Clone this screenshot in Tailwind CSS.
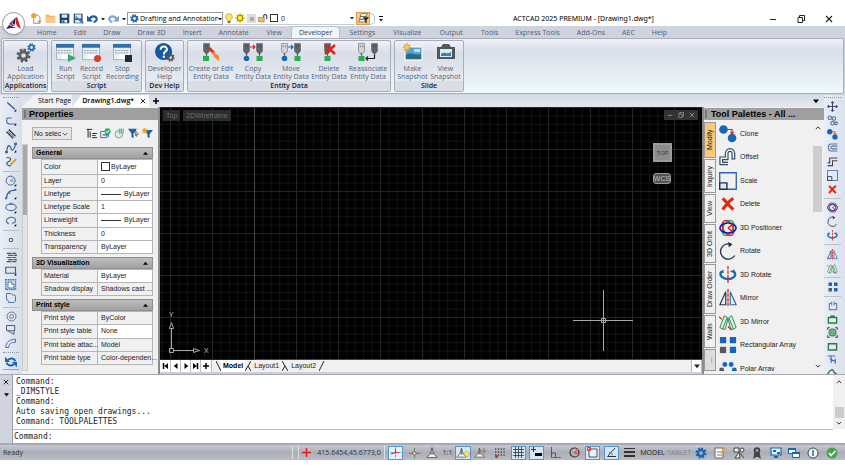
<!DOCTYPE html>
<html lang="en">
<head>
<meta charset="utf-8">
<title>ACTCAD 2025 PREMIUM - [Drawing1.dwg*]</title>
<script src="https://cdn.jsdelivr.net/npm/@tailwindcss/browser@4"></script>
</head>
<body class="bg-white">
<svg class="hidden" aria-hidden="true">
  <defs>
    <symbol id="gear" viewBox="0 0 16 16"><path fill="none" stroke="currentColor" stroke-width="3" stroke-dasharray="2.6 2.1" d="M8 2a6 6 0 1 1 0 12A6 6 0 1 1 8 2z"/><circle cx="8" cy="8" r="4" fill="none" stroke="currentColor" stroke-width="3"/></symbol>
    <symbol id="caret" viewBox="0 0 8 8"><path fill="currentColor" d="M0 2h8L4 7z"/></symbol>
    <symbol id="caretup" viewBox="0 0 8 8"><path fill="currentColor" d="M0 6h8L4 1z"/></symbol>
    <symbol id="chevd" viewBox="0 0 8 8"><path fill="none" stroke="currentColor" stroke-width="1.3" d="M1 2.5l3 3 3-3"/></symbol>
    <symbol id="chevu" viewBox="0 0 8 8"><path fill="none" stroke="currentColor" stroke-width="1.3" d="M1 5.5l3-3 3 3"/></symbol>
    <symbol id="close" viewBox="0 0 8 8"><path fill="none" stroke="currentColor" stroke-width="1.1" d="M1 1l6 6M7 1L1 7"/></symbol>
    <symbol id="restore" viewBox="0 0 8 8"><path fill="none" stroke="currentColor" stroke-width="1" d="M1 2.5h4.5V7.5H1zM2.5 2.5v-2h5v5h-2"/></symbol>
    <symbol id="min" viewBox="0 0 8 8"><path stroke="currentColor" stroke-width="1" d="M1 4.5h6"/></symbol>
    <symbol id="new" viewBox="0 0 16 16"><path fill="#fff" stroke="#666" d="M4 3h6l3 3v9H4z"/><path stroke="#f0a020" stroke-width="2" d="M4 0v8M0 4h8M1 1l6 6M7 1L1 7"/><path d="M9 12l6-2-2 5z" fill="#d88a2a"/></symbol>
    <symbol id="open" viewBox="0 0 16 16"><path fill="#f3b869" d="M1 2h5l1 2h8v10H1z"/><path fill="#f8c987" d="M1 6h14v8H1z"/></symbol>
    <symbol id="save" viewBox="0 0 16 16"><path fill="#1d3f6b" d="M1 1h14v14H1z"/><path fill="#dfeaf5" d="M4 2h8v5H4zM4 10h8v4H4z"/><path fill="#1d3f6b" d="M5 11h3v3H5z"/></symbol>
    <symbol id="saveas" viewBox="0 0 16 16"><path fill="#2a4f80" d="M1 1h13v14H1z"/><path fill="#dfeaf5" d="M3 2h9v6H3zM3 10h9v4H3z"/><path stroke="#2c7cc0" stroke-width="2" fill="none" d="M4 5l9 9M9 9l6 6"/></symbol>
    <symbol id="undo" viewBox="0 0 18 14"><path fill="none" stroke="currentColor" stroke-width="3.400" d="M4 8c3-6 11-6 12 0 0 3-2 4-5 5"/><path fill="currentColor" d="M0 2v10h10z"/></symbol>
    <symbol id="bulb" viewBox="0 0 12 16"><path fill="#ffe95a" stroke="#a58c18" d="M6 1a4.500 4.500 0 0 0-2.500 8.500L4 12h4l.5-2.500A4.500 4.500 0 0 0 6 1z"/><path fill="#666" d="M4 12h4v3H4z"/></symbol>
    <symbol id="sun" viewBox="0 0 16 16"><g stroke="#e0b400" stroke-width="2"><path d="M8 0v16M0 8h16M2.500 2.500l11 11M13.500 2.500l-11 11"/></g><circle cx="8" cy="8" r="4.500" fill="#ffee30" stroke="#8a7400" stroke-width="1.500"/></symbol>
    <symbol id="lock" viewBox="0 0 16 16"><path fill="none" stroke="#3a5a9a" stroke-width="2" d="M9 7V4a3 3 0 0 1 5 0v6"/><path fill="#f0c060" stroke="#8a6a30" d="M1 7h9v7H1z"/></symbol>
    <symbol id="filt" viewBox="0 0 16 16"><path fill="#fff" stroke="#555" d="M5 1h9L11 5H3zM4 5h9l-3 4H2zM3 9h8l-2 4H1z"/><path fill="#222" d="M7 6h9l-3.500 4v5l-2-1v-4z"/></symbol>
    <symbol id="scr" viewBox="0 0 20 20"><path fill="#e9eef3" stroke="#9fb0bf" d="M.5 1.500h18v16H.5z"/><path fill="#2f70ad" d="M0 1h19v4H0z"/><path stroke="#8a98a5" stroke-dasharray="2 1" d="M2 8h15M2 10.500h15"/><path fill="#fff" d="M6 12h12v5H6z"/></symbol>
    <symbol id="help" viewBox="0 0 20 20"><circle cx="9" cy="9" r="9" fill="#1158a5"/><path fill="none" stroke="#fff" stroke-width="2.200" d="M6 7c0-5 7-4 6.500 0C12 9 9.300 9 9.300 12"/><circle cx="9.300" cy="14.500" r="1.300" fill="#fff"/></symbol>
    <symbol id="plug" viewBox="0 0 8 20"><path fill="currentColor" stroke="#555" stroke-width=".6" d="M.5.5h7v9L5.500 12h-3L.5 9.500z"/><path stroke="#555" stroke-width="1.500" d="M4 12v3"/><path fill="#222" fill-opacity=".6" d="M2 3h1v2H2zM5 3h1v2H5z"/></symbol>
    <symbol id="xred" viewBox="0 0 16 16"><path fill="none" stroke="#dd2a12" stroke-width="3.600" d="M2 1.500c4 4 8 9 12 13M14 1.500C9 5 5 10 2 14.500"/></symbol>
    <symbol id="line" viewBox="0 0 16 16"><path stroke="#2a5d9a" stroke-width="1.800" d="M3 2l10 9"/><path d="M12 14h3v-3z"/></symbol>
    <symbol id="clone" viewBox="0 0 20 20"><circle cx="5" cy="5" r="4.800" fill="#1466b8"/><circle cx="14.500" cy="14.500" r="4.800" fill="#1466b8"/><path fill="none" stroke="#e02020" stroke-width="1.300" d="M9 5h5.500v4M12.500 7.500l2 2.500 2-2.500"/></symbol>
    <symbol id="offset" viewBox="0 0 20 20"><path fill="none" stroke="#34496a" stroke-width="1.300" d="M1 18.500V10h6V6a5 5 0 0 1 10.500 0v6h-3V6a2.200 2.200 0 0 0-4.500 0v7H4v3h6M1 18.500h9"/></symbol>
    <symbol id="scale" viewBox="0 0 20 20"><path fill="none" stroke="#2b67a8" stroke-width="1.500" d="M.8.8h18.400v18.400H.8z"/><path fill="#dfe6ee" stroke="#1e2c48" stroke-width="1.500" d="M.8 12h8v7.200h-8z"/></symbol>
    <symbol id="pos3d" viewBox="0 0 20 20"><g fill="none" stroke-width="1.700"><ellipse cx="10" cy="10" rx="5.500" ry="9" stroke="#10c040" transform="rotate(28 10 10)"/><ellipse cx="10" cy="10" rx="5.500" ry="9" stroke="#e82020" transform="rotate(-28 10 10)"/><ellipse cx="10" cy="10" rx="9" ry="5.500" stroke="#1010e0"/><path stroke="#e82020" d="M10 10l5 4M10 10l5-4"/></g></symbol>
    <symbol id="rot" viewBox="0 0 20 20"><path fill="none" stroke="#23344f" stroke-width="1.500" d="M13 2.500A8.500 8.500 0 1 0 17.500 15"/><path fill="#23344f" d="M10 0l5 2.500L11 6z"/></symbol>
    <symbol id="rot3d" viewBox="0 0 20 20"><path fill="none" stroke="#1c6ea8" stroke-width="2.600" d="M3 6C-1 11 5 14.500 10 14.500S20 11 17 7"/><path fill="#1c6ea8" d="M12 6l5-2 2 5zM0 7l5-3v4z"/><path stroke="#e02020" stroke-width="1.400" stroke-dasharray="4 1" d="M10 0v20"/></symbol>
    <symbol id="mirror" viewBox="0 0 20 20"><path fill="none" stroke="#23344f" stroke-width="1.300" d="M7.500 3v14.500H1z"/><path fill="none" stroke="#2b67a8" stroke-width="1.300" d="M12.500 3v14.500H19z"/><path stroke="#e02020" stroke-width="1.500" stroke-dasharray="4 1" d="M10 0v20"/></symbol>
    <symbol id="mir3d" viewBox="0 0 20 20"><g fill="#dff3e4" stroke="#2f8a52" stroke-width="1.100"><path d="M1 16L6 3l3 2-5 13zM4 18h3L10 6 9 5M19 16L14 3l-3 2 5 13zM16 18h-3L10 6"/></g><path stroke="#e02020" stroke-width="1.400" d="M0 4l3 3M10 15l4 4"/></symbol>
    <symbol id="array" viewBox="0 0 20 20"><path fill="#1466b8" d="M1 1h7v7H1zM12 1h7v7h-7zM12 12h7v7h-7z"/><path fill="#5a5a5a" d="M1 12h7v7H1z"/></symbol>
    <symbol id="polar" viewBox="0 0 20 20"><g fill="#1466b8"><circle cx="6.500" cy="5" r="2.700"/><circle cx="13.500" cy="5" r="2.700"/><circle cx="17" cy="11" r="2.700"/></g><circle cx="3" cy="11" r="2.700" fill="#5a5a5a"/></symbol>
    <symbol id="curve" viewBox="0 0 16 16"><path fill="none" stroke="#3a6ea8" stroke-width="1.500" d="M3 4C0 9 3 12 7 12h7M3 4h6"/><path d="M12 14h3v-3z"/></symbol>
    <symbol id="dbl" viewBox="0 0 16 16"><path stroke="#20304c" stroke-width="1.500" d="M2 5l9 9M5 2l9 9"/><path stroke="#3a7ec0" stroke-width="1.200" d="M3.500 3.500l9 9"/></symbol>
    <symbol id="spline" viewBox="0 0 16 16"><path fill="none" stroke="#35507a" stroke-width="1.500" d="M2 13c2-14 6-6 6-4s4 4 6-6"/><path fill="#2f70b0" d="M0 12h4v3H0zM12 1h4v3h-4z"/><path d="M12 14h3v-3z"/></symbol>
    <symbol id="sketch" viewBox="0 0 16 16"><path fill="none" stroke="#35507a" stroke-width="1.500" d="M2 2c8 0 6 4 2 6s0 6 4 5"/><path stroke="#e89a28" stroke-width="2.500" d="M7 12l8-8"/></symbol>
    <symbol id="circ" viewBox="0 0 16 16"><circle cx="7.500" cy="7.500" r="6" fill="none" stroke="#4a6288" stroke-width="1.300"/><path stroke="#3a7ec0" d="M7 8l4-4M7 8h5"/><path d="M12 15h3v-3z"/></symbol>
    <symbol id="arc" viewBox="0 0 16 16"><path fill="none" stroke="#35507a" stroke-width="1.500" d="M2 14C2 7 6 3 13 3"/><path fill="#3a7ec0" d="M0 12h3v3H0zM12 1h3v3h-3zM4 5h3v3H4z"/><path d="M12 15h3v-3z"/></symbol>
    <symbol id="ell" viewBox="0 0 16 16"><ellipse cx="8" cy="7" rx="7" ry="4.500" fill="none" stroke="#4a6fa0" stroke-width="1.500"/><path fill="#3a7ec0" d="M6.500 1h3v3h-3z"/><path d="M12 15h3v-3z"/></symbol>
    <symbol id="ellarc" viewBox="0 0 16 16"><path fill="none" stroke="#4a6fa0" stroke-width="1.500" d="M2 9C0 3 14 0 14 7c0 2-1 4-5 4M5 12l-3-3"/><path d="M12 15h3v-3z"/></symbol>
    <symbol id="pt" viewBox="0 0 16 16"><path fill="none" stroke="#4a6288" stroke-width="1.300" d="M6 6h4v4H6z"/></symbol>
    <symbol id="hatch" viewBox="0 0 16 16"><path stroke="#555" stroke-width="1.700" stroke-dasharray="7 1" d="M1 2h14M3 5h13M1 8h14M3 11h13M1 14h14"/></symbol>
    <symbol id="rect" viewBox="0 0 16 16"><path fill="none" stroke="#3c5f90" stroke-width="1.500" d="M1 3h13v8H1z"/><path d="M12 14h3v-3z"/></symbol>
    <symbol id="region" viewBox="0 0 16 16"><path fill="#cfe2f5" stroke="#2f78c0" stroke-width="2" stroke-dasharray="2 1" d="M1 1h13v13H1z"/><path fill="#fff" stroke="#35507a" d="M4 4h5v3h3v5H4z"/></symbol>
    <symbol id="bound" viewBox="0 0 16 16"><path fill="none" stroke="#4a6fa0" stroke-width="1.300" d="M2 2h6l2 2h3l1 2v6l-2 2H5l-1-3-2-1z"/></symbol>
    <symbol id="donut" viewBox="0 0 16 16"><g fill="none" stroke="#5a6c88" stroke-width="1.300"><circle cx="8" cy="8" r="6.500"/><circle cx="8" cy="8" r="2.800"/></g></symbol>
    <symbol id="wipe" viewBox="0 0 16 16"><path fill="none" stroke="#4a5c78" stroke-width="1.300" d="M2 2h11v7H2zM4 9l8 5V9"/></symbol>
    <symbol id="trace" viewBox="0 0 16 16"><path fill="#dfe8f8" stroke="#5068b0" stroke-width="1.300" d="M1 14c0-7 5-11 13-11v4C8 7 5 9 5 14z"/></symbol>
    <symbol id="sync" viewBox="0 0 16 16"><g fill="none" stroke="#1666b4" stroke-width="2.600"><path d="M4 5c4-3 8-2 10 2M12 11c-4 3-8 2-10-2"/></g><path fill="#1666b4" d="M0 1v7h7zM16 15V8H9z"/></symbol>
    <symbol id="move" viewBox="0 0 16 16"><path fill="none" stroke="#3a4c6c" stroke-width="1.500" d="M8 1v14M1 8h14M6 3l2-2 2 2M6 13l2 2 2-2M3 6L1 8l2 2M13 6l2 2-2 2"/></symbol>
    <symbol id="copy" viewBox="0 0 16 16"><g fill="none" stroke="#4a6898" stroke-width="1.500"><circle cx="4" cy="4" r="2.500"/><circle cx="10" cy="5" r="2.500"/><circle cx="8" cy="12" r="2.500"/><circle cx="13" cy="12" r="2"/></g></symbol>
    <symbol id="cshape" viewBox="0 0 16 16"><path fill="none" stroke="#5078a8" stroke-width="1.500" d="M15 3H5C1 4 1 12 5 13h10M15 6H7C5 7 5 9 7 10h8"/></symbol>
    <symbol id="steps" viewBox="0 0 16 16"><path fill="none" stroke="#444" stroke-width="1.500" d="M1 14h7V7h7M1 10h3V3h11"/></symbol>
    <symbol id="brk" viewBox="0 0 16 16"><path fill="none" stroke="#4468a0" stroke-width="1.500" d="M5 4H2v10h12V4h-3M6 1v6M10 1v6"/></symbol>
    <symbol id="grn" viewBox="0 0 16 16"><path fill="#dff3e4" stroke="#2c7a4c" stroke-width="2" d="M2 5h12v8H2z"/><path fill="#2c7a4c" d="M5 2h6v3H5z"/></symbol>
    <symbol id="grnsel" viewBox="0 0 16 16"><path fill="none" stroke="#222" stroke-width="1.300" d="M1 4V1h3M12 1h3v3M15 12v3h-3M4 15H1v-3"/><circle cx="8" cy="8" r="5" fill="#8ccf9c" stroke="#2c7a4c" stroke-width="1.500"/><path fill="none" stroke="#2c7a4c" d="M6 6h4v4H6z"/></symbol>
    <symbol id="grnbox" viewBox="0 0 16 16"><path fill="none" stroke="#2c7a4c" stroke-width="2" d="M2 4h12v9H2z"/></symbol>
    <symbol id="txt" viewBox="0 0 16 16"><path fill="none" stroke="#3a6ea8" stroke-width="1.600" d="M1 3h11M6 3v10M4 7l8 4M12 7v7"/></symbol>
    <symbol id="pyr" viewBox="0 0 16 16"><path fill="#eee" stroke="#555" stroke-width="1.100" d="M8 1l2.500 8L15 14H1l4.500-5zM5.500 9h5M8 1v8"/></symbol>
    <symbol id="tree" viewBox="0 0 16 16"><path fill="none" stroke="#222" stroke-width="1.400" d="M1 2h8M3 2v12M6 5v9M9 8h7M9 11h5M9 14h7"/></symbol>
    <symbol id="qsel" viewBox="0 0 16 16"><path fill="none" stroke="#3a6080" stroke-width="1.200" d="M1 5h9v9H1z"/><circle cx="11" cy="5" r="4.500" fill="#3cb060"/><path fill="none" stroke="#fff" stroke-width="1.400" d="M8.500 5l2 2 3-4"/><path fill="none" stroke="#2a70b0" stroke-width="1.500" d="M4 10h8v3"/></symbol>
    <symbol id="sel2" viewBox="0 0 16 16"><circle cx="7" cy="9" r="5.500" fill="#dce6ee" stroke="#6a7a8a"/><path fill="#4aa860" d="M7 1h7v7H7z"/><path stroke="#fff" d="M9 1v7M12 1v7"/></symbol>
    <symbol id="funnel" viewBox="0 0 16 16"><path fill="#1c62a8" d="M0 1h13L8 8v7l-3-2V8z"/><path fill="#fff" stroke="#333" d="M10 3l5 6h-3l1 3-2-1z"/></symbol>
    <symbol id="funnel2" viewBox="0 0 16 16"><path fill="#1c62a8" d="M2 3h14l-5 6v6l-3-2V9z"/><path stroke="#e8a828" stroke-width="1.500" d="M4 0v8M0 4h8M1 1l6 6M7 1L1 7"/></symbol>
  </defs>
</svg>

<div class="relative flex h-screen flex-col overflow-hidden pt-[11px] pb-[15px] font-['Open_Sans','Noto_Sans',sans-serif] text-[7px] leading-[8px] text-[#222]">

  <!-- title bar -->
  <header class="flex h-[15px] shrink-0 items-center pl-[31px]">
    <div class="flex items-center gap-[3px]" role="toolbar" aria-label="Quick access">
      <button aria-label="New"><svg class="size-[11px]"><use href="#new"/></svg></button>
      <button aria-label="Open"><svg class="size-[11px]"><use href="#open"/></svg></button>
      <button aria-label="Save"><svg class="size-[11px]"><use href="#save"/></svg></button>
      <button aria-label="Save as"><svg class="size-[11px]"><use href="#saveas"/></svg></button>
      <button aria-label="Undo" class="text-[#1a5fb0]"><svg class="h-[9px] w-[11px]"><use href="#undo"/></svg></button>
      <button aria-label="Undo list"><svg class="size-[4px]"><use href="#caret"/></svg></button>
      <button aria-label="Redo" class="text-[#7ba9cf]"><svg class="h-[9px] w-[11px] -scale-x-100"><use href="#undo"/></svg></button>
      <button aria-label="Redo list"><svg class="size-[4px]"><use href="#caret"/></svg></button>
    </div>
    <div class="relative ml-px flex h-[13px] w-[96px] items-center border border-[#999] pl-[2px]">
      <svg class="size-[9px] shrink-0 text-[#1a62ae]"><use href="#gear"/></svg>
      <select aria-label="Workspace" class="min-w-0 flex-1 appearance-none pl-px text-[7px] leading-[11px] text-black"><option>Drafting and Annotation</option></select>
      <svg class="pointer-events-none size-[4px] shrink-0"><use href="#caret"/></svg>
    </div>
    <div class="ml-[2px] flex h-[13px] w-[130px] items-center gap-[2px] border-b border-[#ccc]">
      <svg class="h-[11px] w-[8px]"><use href="#bulb"/></svg>
      <svg class="size-[10px]"><use href="#sun"/></svg>
      <svg class="size-[9px]" viewBox="0 0 9 9"><path fill="#ddd" d="M0 0h9v9H0z"/><path fill="#aaa" d="M3 3h4v4H3z"/></svg>
      <svg class="size-[10px]"><use href="#lock"/></svg>
      <span class="size-[8px] border border-[#333] bg-white"></span>
      <select aria-label="Layer" class="ml-px min-w-0 flex-1 appearance-none text-[7px] leading-[11px]"><option>0</option></select>
      <svg class="pointer-events-none mr-px size-[4px] shrink-0"><use href="#caret"/></svg>
    </div>
    <button aria-label="Layer filter" class="ml-px flex h-[13px] w-[14px] shrink-0 items-center justify-center border border-[#d8a050] bg-[#fbc77a]"><svg class="size-[11px] shrink-0"><use href="#filt"/></svg></button>
    <span class="h-[12px] w-[5px] rounded-r-full border-y border-r border-[#aac4dc]"></span>
    <button aria-label="Customize toolbar" class="ml-[4px] flex flex-col items-center gap-px"><span class="h-px w-[4px] bg-black"></span><svg class="size-[4px]"><use href="#caret"/></svg></button>
    <h1 class="ml-[130px] flex-1 font-['Noto_Sans','Open_Sans',sans-serif] whitespace-nowrap text-black">ACTCAD 2025 PREMIUM - [Drawing1.dwg*]</h1>
    <div class="flex gap-[20px] pr-[12px]">
      <button aria-label="Minimize"><svg class="size-[8px]"><use href="#min"/></svg></button>
      <button aria-label="Restore"><svg class="size-[8px]"><use href="#restore"/></svg></button>
      <button aria-label="Close"><svg class="size-[8px]"><use href="#close"/></svg></button>
    </div>
  </header>

  <button aria-label="Application menu" class="absolute top-[12px] left-[2px] z-10 flex size-[23px] items-center justify-center rounded-full border border-[#999] bg-white shadow-sm">
    <svg class="size-[17px]" viewBox="0 0 17 17"><path fill="#1b2c6b" d="M1 14l3-4 2 1 5 2-5 0z"/><path fill="#1b2c6b" d="M7 7l3-4v7l-2-1z"/><path fill="#d41f2c" d="M10 3l2-1 4 12-3-2-2-3zM4 9l4-4-1 4 3 2-3 0z"/></svg>
  </button>

  <!-- ribbon tabs -->
  <nav class="flex h-[12px] shrink-0 items-stretch bg-[#cfd3de] pl-[28px] leading-[13px] text-[#4f5c74]">
    <div class="flex [&>a]:pr-[8px] [&>a]:pl-[9px]"><a href="#">Home</a><a href="#">Edit</a><a href="#">Draw</a><a href="#">Draw 3D</a><a href="#">Insert</a></div>
    <a href="#" class="px-[9px]">Annotate</a><a href="#" class="px-[9px]">View</a><a href="#" aria-current="page" class="rounded-t-sm border-x border-t border-[#a9c5d4] bg-[#eff5f9] px-[7px] leading-[12px] text-[#2f3f5c]">Developer</a><a href="#" class="px-[9px]">Settings</a><a href="#" class="px-[9px]">Visualize</a><a href="#" class="px-[9px]">Output</a>
    <div class="flex [&>a]:pr-[8px] [&>a]:pl-[9px]"><a href="#">Tools</a><a href="#">Express Tools</a><a href="#">Add-Ons</a><a href="#">AEC</a><a href="#">Help</a></div>
  </nav>

  <!-- ribbon -->
  <div class="h-[57px] shrink-0 bg-[#cfd3de] px-px pb-px">
    <div class="flex h-[56px] gap-[3px] rounded-[2px] border border-[#a9aeb9] bg-linear-to-b from-[#eff1f6] via-[#dadee8] via-20% to-[#eefafa] px-px py-px text-[#55637a]">
      <section class="flex w-[45px] flex-col rounded-[2px] border border-[#a6aebb] bg-linear-to-b from-[#f0f2f7] via-[#d9dde8] via-25% to-[#eaf0f3]">
        <div class="flex flex-1 justify-center">
          <button class="flex flex-col items-center"><span class="relative block h-[24px] w-[22px]"><svg class="absolute top-[7px] left-[2px] size-[15px] text-[#5c5f63]"><use href="#gear"/></svg><svg class="absolute top-[2px] left-[13px] size-[9px] text-[#2e6cab]"><use href="#gear"/></svg></span>Load<br>Application</button>
        </div>
        <h2 class="h-[10px] bg-[#dadde5] text-center leading-[9px] font-semibold text-[#1c2430]">Applications</h2>
      </section>
      <section class="flex w-[91px] flex-col rounded-[2px] border border-[#a6aebb] bg-linear-to-b from-[#f0f2f7] via-[#d9dde8] via-25% to-[#eaf0f3]">
        <div class="flex flex-1 pl-px">
          <button class="flex w-[25px] flex-col items-center"><span class="relative block h-[24px] w-[19px]"><svg class="absolute top-[2px] left-0 size-[19px]"><use href="#scr"/></svg><svg class="absolute top-[13px] left-[12px] size-[8px]" viewBox="0 0 8 8"><path fill="#35a873" d="M0 0l8 4-8 4z"/></svg></span>Run<br>Script</button>
          <button class="flex w-[27px] flex-col items-center"><span class="relative block h-[24px] w-[19px]"><svg class="absolute top-[2px] left-0 size-[19px]"><use href="#scr"/></svg><span class="absolute top-[14px] left-[12px] size-[7px] rounded-full bg-[#d6402c]"></span></span>Record<br>Script</button>
          <button class="flex w-[35px] flex-col items-center"><span class="relative block h-[24px] w-[19px]"><svg class="absolute top-[2px] left-0 size-[19px]"><use href="#scr"/></svg><span class="absolute top-[14px] left-[12px] size-[7px] bg-[#26292c]"></span></span>Stop<br>Recording</button>
        </div>
        <h2 class="h-[10px] bg-[#dadde5] text-center leading-[9px] font-semibold text-[#1c2430]">Script</h2>
      </section>
      <section class="flex w-[39px] flex-col rounded-[2px] border border-[#a6aebb] bg-linear-to-b from-[#f0f2f7] via-[#d9dde8] via-25% to-[#eaf0f3]">
        <div class="flex flex-1 justify-center">
          <button class="flex flex-col items-center"><span class="relative block h-[24px] w-[19px]"><svg class="absolute top-[2px] left-0 size-[19px]"><use href="#help"/></svg><svg class="absolute top-[12px] left-[11px] size-[9px] text-[#555]"><use href="#gear"/></svg></span>Developer<br>Help</button>
        </div>
        <h2 class="h-[10px] bg-[#dadde5] text-center leading-[9px] font-semibold whitespace-nowrap text-[#1c2430]">Dev Help</h2>
      </section>
      <section class="flex w-[204px] flex-col rounded-[2px] border border-[#a6aebb] bg-linear-to-b from-[#f0f2f7] via-[#d9dde8] via-25% to-[#eaf0f3]">
        <div class="flex flex-1 whitespace-nowrap">
          <button class="flex w-[46px] flex-col items-center"><svg class="mb-[4px] h-[20px] w-[22px] pt-[2px] text-[#606468]" viewBox="0 0 22 18"><use href="#plug" width="7" height="17" x="3"/><path fill="#25b04c" d="M3 13h6v5H3z"/><path stroke="#dd2c1c" stroke-width="3" d="M9 5l5 5"/><path fill="#f08a2c" d="M12 8l7 5v5l-5-4z"/></svg>Create or Edit<br>Entity Data</button>
          <button class="flex w-[38px] flex-col items-center"><svg class="mb-[4px] h-[20px] w-[22px] pt-[2px] text-[#606468]" viewBox="0 0 22 18"><use href="#plug" width="7" height="17" x="1"/><use href="#plug" width="7" height="17" x="14"/><circle cx="4.500" cy="15.500" r="2.800" fill="#1466b8"/><path fill="#25b04c" d="M14.500 13h6v5h-6z"/><path fill="none" stroke="#e02020" stroke-width="1.200" d="M8 4h5M11 2l2 2-2 2"/></svg>Copy<br>Entity Data</button>
          <button class="flex w-[38px] flex-col items-center"><svg class="mb-[4px] h-[20px] w-[22px] pt-[2px]" viewBox="0 0 22 18"><use href="#plug" width="7" height="17" x="1" color="#d4d6da"/><use href="#plug" width="7" height="17" x="14" color="#606468"/><circle cx="4.500" cy="15.500" r="2.800" fill="#1466b8"/><path fill="#25b04c" d="M14.500 13h6v5h-6z"/><path fill="none" stroke="#1466b8" stroke-width="1.200" d="M8 4h5M11 2l2 2-2 2"/></svg>Move<br>Entity Data</button>
          <button class="flex w-[38px] flex-col items-center"><svg class="mb-[4px] h-[20px] w-[22px] pt-[2px] text-[#606468]" viewBox="0 0 22 18"><use href="#plug" width="7" height="17" x="6"/><path fill="#25b04c" d="M6.500 13h6v5h-6z"/><path stroke="#e51d1d" stroke-width="2.400" d="M7 2l10 9M17 2L7 11"/></svg>Delete<br>Entity Data</button>
          <button class="flex w-[40px] flex-col items-center"><svg class="mb-[4px] h-[20px] w-[22px] pt-[2px]" viewBox="0 0 22 18"><use href="#plug" width="7" height="17" x="1" color="#d4d6da"/><use href="#plug" width="7" height="17" x="14" color="#606468"/><path fill="#25b04c" d="M1.500 13h6v5h-6z"/><path fill="none" stroke="#222" stroke-width="1.200" d="M17.500 12v3.500H9.500M11 13.500l-2 2 2 2"/></svg>Reassociate<br>Entity Data</button>
        </div>
        <h2 class="h-[10px] bg-[#dadde5] text-center leading-[9px] font-semibold text-[#1c2430]">Entity Data</h2>
      </section>
      <section class="flex w-[70px] flex-col rounded-[2px] border border-[#a6aebb] bg-linear-to-b from-[#f0f2f7] via-[#d9dde8] via-25% to-[#eaf0f3]">
        <div class="flex flex-1 pl-px">
          <button class="flex w-[33px] flex-col items-center"><svg class="mb-[4px] h-[20px] w-[22px] pt-[2px]" viewBox="0 0 22 18"><path fill="#4fa3dc" stroke="#fff" d="M3 4h17v13H3z"/><path fill="#2c6a7c" d="M4 12c5-4 9 1 15-1v5H4z"/><path fill="#bfe3f4" d="M12 6h6v3h-6z"/><path stroke="#f09a20" stroke-width="1.300" d="M5 0v9M1 4.500h8M2 1.500l6 6M8 1.500l-6 6"/><circle cx="5" cy="4.500" r="2" fill="#ffd050"/></svg>Make<br>Snapshot</button>
          <button class="flex w-[33px] flex-col items-center"><svg class="mb-[4px] h-[20px] w-[22px] pt-[2px]" viewBox="0 0 22 18"><path fill="#53575b" d="M2 4h4l2-3h6l2 3h4v12H2z"/><path fill="#d9ebf4" d="M5 6h12v8H5z"/><path fill="#2c8ab0" d="M6 11c4-3 6 1 10-2v4H6z"/></svg>View<br>Snapshot</button>
        </div>
        <h2 class="h-[10px] bg-[#dadde5] text-center leading-[9px] font-semibold text-[#1c2430]">Slide</h2>
      </section>
    </div>
  </div>

  <!-- workspace -->
  <main class="flex min-h-0 flex-1 bg-[#dde2ec]">
    <!-- draw toolbar -->
    <div role="toolbar" aria-label="Draw" class="flex w-[22px] shrink-0 flex-col items-stretch overflow-hidden bg-linear-to-r from-[#e9edf5] to-[#d7deea] px-[3px]">
      <span class="my-[2px] h-px border-t border-dotted border-[#8a93a5]"></span>
      <div class="grid h-[69px] shrink-0 auto-rows-fr place-items-center">
        <button aria-label="Line"><svg class="size-[12px]"><use href="#line"/></svg></button>
        <button aria-label="Polyline"><svg class="size-[12px]"><use href="#curve"/></svg></button>
        <button aria-label="Double line"><svg class="size-[12px]"><use href="#dbl"/></svg></button>
        <button aria-label="Spline"><svg class="size-[12px]"><use href="#spline"/></svg></button>
        <button aria-label="Sketch"><svg class="size-[12px]"><use href="#sketch"/></svg></button>
      </div>
      <span class="my-[2px] h-px shrink-0 bg-[#b9c1cf]"></span>
      <div class="grid h-[54px] shrink-0 auto-rows-fr place-items-center">
        <button aria-label="Circle"><svg class="size-[12px]"><use href="#circ"/></svg></button>
        <button aria-label="Arc"><svg class="size-[12px]"><use href="#arc"/></svg></button>
        <button aria-label="Ellipse"><svg class="size-[12px]"><use href="#ell"/></svg></button>
        <button aria-label="Elliptical arc"><svg class="size-[12px]"><use href="#ellarc"/></svg></button>
      </div>
      <span class="my-[2px] h-px shrink-0 bg-[#b9c1cf]"></span>
      <div class="grid h-[13px] shrink-0 place-items-center"><button aria-label="Point"><svg class="size-[12px]"><use href="#pt"/></svg></button></div>
      <span class="my-[2px] h-px shrink-0 bg-[#b9c1cf]"></span>
      <div class="grid h-[54px] shrink-0 auto-rows-fr place-items-center">
        <button aria-label="Hatch"><svg class="size-[11px]"><use href="#hatch"/></svg></button>
        <button aria-label="Rectangle"><svg class="size-[12px]"><use href="#rect"/></svg></button>
        <button aria-label="Region"><svg class="size-[12px]"><use href="#region"/></svg></button>
        <button aria-label="Boundary"><svg class="size-[12px]"><use href="#bound"/></svg></button>
      </div>
      <span class="my-[2px] h-px shrink-0 bg-[#b9c1cf]"></span>
      <div class="grid h-[40px] shrink-0 auto-rows-fr place-items-center">
        <button aria-label="Donut"><svg class="size-[11px]"><use href="#donut"/></svg></button>
        <button aria-label="Wipeout"><svg class="size-[12px]"><use href="#wipe"/></svg></button>
        <button aria-label="Trace"><svg class="size-[12px]"><use href="#trace"/></svg></button>
      </div>
      <span class="my-[2px] h-px shrink-0 border-t border-dotted border-[#8a93a5]"></span>
      <div class="grid h-[14px] shrink-0 place-items-center"><button aria-label="Regenerate"><svg class="size-[12px]"><use href="#sync"/></svg></button></div>
      <span class="h-px shrink-0 bg-[#9aa3b3]"></span>
    </div>

    <div class="flex min-w-0 flex-1 flex-col">
      <!-- document tabs -->
      <div class="flex h-[12px] shrink-0 items-stretch bg-linear-to-b from-[#d6dce8] to-[#e3e8f0] text-black">
        <a href="#" class="bg-[#f0f2f6] pt-[2px] pr-px pl-[16px] [clip-path:polygon(12px_0,100%_0,100%_100%,0_100%)]">Start Page</a>
        <span class="flex items-center gap-[6px] bg-white pr-[3px] pl-[10px] [clip-path:polygon(9px_0,100%_0,100%_100%,0_100%)]"><a href="#" aria-current="page" class="font-semibold">Drawing1.dwg*</a><button aria-label="Close drawing"><svg class="size-[6px]"><use href="#close"/></svg></button></span>
        <button aria-label="New drawing" class="ml-[4px]"><svg class="size-[6px]" viewBox="0 0 6 6"><path stroke="#000" stroke-width="1.500" d="M3 0v6M0 3h6"/></svg></button>
        <button aria-label="Tab list" class="mr-[5px] ml-auto"><svg class="size-[6px]"><use href="#caret"/></svg></button>
      </div>

      <div class="flex min-h-0 flex-1 font-['Liberation_Sans',Arial,sans-serif]">
        <!-- properties -->
        <aside class="flex w-[138px] shrink-0 flex-col overflow-hidden border-r-2 border-[#8c8c8c] bg-[#f0f0f0]">
          <h2 class="mt-px flex h-[12px] shrink-0 items-center gap-[3px] bg-[#9f9f9f] pl-[2px] text-[9px] font-bold text-black"><span class="h-[8px] w-[2px] bg-[#777]"></span>Properties</h2>
          <div class="flex h-[27px] shrink-0 items-center pr-[5px] pl-[10px]">
            <div class="relative h-[13px] w-[40px] border border-[#b0b0b0] bg-[#e6e6e6]">
              <select aria-label="Selection" class="block h-full w-[28px] appearance-none overflow-hidden pl-px text-[7px] leading-[11px] text-[#222]"><option>No selection</option></select>
              <svg class="pointer-events-none absolute top-[3px] right-[3px] size-[6px] text-[#555]"><use href="#chevd"/></svg>
            </div>
            <div class="ml-auto flex gap-[3px]">
              <button aria-label="Tree"><svg class="size-[11px]"><use href="#tree"/></svg></button>
              <button aria-label="Toggle pick"><svg class="size-[11px]"><use href="#qsel"/></svg></button>
              <button aria-label="Select entities"><svg class="size-[11px]"><use href="#sel2"/></svg></button>
              <button aria-label="Filter"><svg class="size-[11px]"><use href="#funnel"/></svg></button>
              <button aria-label="Quick select"><svg class="size-[11px]"><use href="#funnel2"/></svg></button>
            </div>
          </div>
          <div class="flex min-h-0 flex-1 pb-[3px]">
            <div class="mt-[-3px] w-[6px] shrink-0 border border-[#ccc] bg-[#e4e4e4]"><div class="h-[70px] bg-[#a9a9a9]"></div></div>
            <div class="min-w-0 flex-1 pr-[5px] pl-[4px]">
              <h3 class="flex h-[12px] items-center justify-between border border-[#8f8f8f] bg-linear-to-b from-[#bdbdbd] to-[#a2a2a2] pr-[4px] pl-[3px] font-bold text-black">General<svg class="size-[5px]"><use href="#caretup"/></svg></h3>
              <table class="ml-[9px] h-[95px] w-[112px] table-fixed border-collapse [&_td]:border [&_td]:border-[#b5b5b5] [&_td]:bg-white [&_td]:py-0 [&_td]:pl-[3px] [&_th]:w-[56px] [&_th]:border [&_th]:border-[#b5b5b5] [&_th]:py-0 [&_th]:pl-[2px] [&_th]:text-left [&_th]:font-normal [&_th]:whitespace-nowrap">
                <tr><th>Color</th><td><span class="flex items-center"><span class="mr-px size-[9px] border border-[#333]"></span>ByLayer</span></td></tr>
                <tr><th>Layer</th><td>0</td></tr>
                <tr><th>Linetype</th><td><span class="flex items-center gap-[3px]"><span class="h-px w-[20px] bg-[#333]"></span>ByLayer</span></td></tr>
                <tr><th>Linetype Scale</th><td>1</td></tr>
                <tr><th>Lineweight</th><td><span class="flex items-center gap-[3px]"><span class="h-px w-[20px] bg-[#333]"></span>ByLayer</span></td></tr>
                <tr><th>Thickness</th><td>0</td></tr>
                <tr><th>Transparency</th><td>ByLayer</td></tr>
              </table>
              <h3 class="mt-[3px] flex h-[12px] items-center justify-between border border-[#8f8f8f] bg-linear-to-b from-[#bdbdbd] to-[#a2a2a2] pr-[4px] pl-[3px] font-bold text-black">3D Visualization<svg class="size-[5px]"><use href="#caretup"/></svg></h3>
              <table class="ml-[9px] h-[27px] w-[112px] table-fixed border-collapse [&_td]:border [&_td]:border-[#b5b5b5] [&_td]:py-0 [&_td]:pl-[3px] [&_td]:whitespace-nowrap [&_th]:w-[56px] [&_th]:border [&_th]:border-[#b5b5b5] [&_th]:py-0 [&_th]:pl-[2px] [&_th]:text-left [&_th]:font-normal [&_th]:whitespace-nowrap">
                <tr><th>Material</th><td class="bg-white">ByLayer</td></tr>
                <tr><th>Shadow display</th><td>Shadows cast ...</td></tr>
              </table>
              <h3 class="mt-[3px] flex h-[12px] items-center justify-between border border-[#8f8f8f] bg-linear-to-b from-[#bdbdbd] to-[#a2a2a2] pr-[4px] pl-[3px] font-bold text-black">Print style<svg class="size-[5px]"><use href="#caretup"/></svg></h3>
              <table class="ml-[9px] h-[54px] w-[112px] table-fixed border-collapse [&_td]:border [&_td]:border-[#b5b5b5] [&_td]:py-0 [&_td]:pl-[3px] [&_td]:whitespace-nowrap [&_th]:w-[56px] [&_th]:border [&_th]:border-[#b5b5b5] [&_th]:py-0 [&_th]:pl-[2px] [&_th]:text-left [&_th]:font-normal [&_th]:whitespace-nowrap">
                <tr><th>Print style</th><td>ByColor</td></tr>
                <tr><th>Print style table</th><td class="bg-white">None</td></tr>
                <tr><th>Print table attac...</th><td>Model</td></tr>
                <tr><th>Print table type</th><td>Color-dependen...</td></tr>
              </table>
            </div>
          </div>
        </aside>

        <!-- drawing canvas -->
        <section class="flex min-w-0 flex-1 flex-col">
          <div class="relative min-h-0 flex-1 overflow-hidden bg-black">
            <svg class="absolute inset-0 size-full">
              <defs>
                <pattern id="minor" width="8.400" height="8.400" x="94" y="252" patternUnits="userSpaceOnUse"><path fill="none" stroke="#141414" d="M.5 0v8.400M0 .5h8.400"/></pattern>
                <pattern id="major" width="42" height="42" x="94" y="252" patternUnits="userSpaceOnUse"><path fill="none" stroke="#252525" d="M.5 0v42M0 .5h42"/></pattern>
              </defs>
              <rect width="100%" height="100%" fill="url(#minor)"/>
              <rect width="100%" height="100%" fill="url(#major)"/>
              <path stroke="#444" d="M94.500 0v252M94 252.500h2000"/>
              <g fill="none" stroke="#a8a8a8">
                <path d="M443.500 183v61M413 213.500h60M441.500 211.500h4v4h-4z"/>
                <path d="M11.500 241v-20M13 243.500h20M9.500 241.500h4v4h-4z"/>
                <path d="M9.500 221.500l2-6 2 6zM33.500 241.500l6 2-6 2z"/>
              </g>
              <g fill="#b8b8b8" font-family="Liberation Sans, Arial, sans-serif" font-size="7"><text x="9" y="210">Y</text><text x="44" y="246">X</text></g>
            </svg>
            <div class="absolute top-[3px] left-[3px] flex gap-[3px] text-[#6f6f6f]"><button class="bg-[#2c2c2c] px-[3px] leading-[11px]">Top</button><button class="bg-[#2c2c2c] px-[3px] leading-[11px]">2DWireframe</button></div>
            <div class="absolute top-[3px] right-[4px] flex h-[10px] w-[34px] items-center justify-around bg-[#333] text-[#999]">
              <button aria-label="Minimize drawing"><svg class="size-[6px]"><use href="#min"/></svg></button><button aria-label="Restore drawing"><svg class="size-[6px]"><use href="#restore"/></svg></button><button aria-label="Close window"><svg class="size-[6px]"><use href="#close"/></svg></button>
            </div>
            <button class="absolute top-[36px] right-[30px] flex size-[19px] items-center justify-center border-2 border-[#9b9b9b] bg-[#8c8c8c] text-[6px] text-[#3c3c3c]">TOP</button>
            <button class="absolute top-[66px] right-[31px] flex h-[11px] w-[18px] items-center justify-center rounded-[3px] border border-[#999] bg-[#555] text-[7px] text-[#bbb]">WCS</button>
          </div>
          <div class="flex h-[12px] shrink-0 items-stretch bg-[#f0f0f0] text-[#222]">
            <div class="flex">
              <button aria-label="First layout" class="flex w-[11px] items-center justify-center border-r border-[#bbb] bg-white"><svg class="size-[6px]" viewBox="0 0 8 8"><path d="M1 0h2v8H1zM8 0v8L3 4z"/></svg></button>
              <button aria-label="Previous layout" class="flex w-[10px] items-center justify-center border-r border-[#bbb] bg-white"><svg class="size-[6px]" viewBox="0 0 8 8"><path d="M6 0v8L1 4z"/></svg></button>
              <button aria-label="Next layout" class="flex w-[10px] items-center justify-center border-r border-[#bbb] bg-white"><svg class="size-[6px]" viewBox="0 0 8 8"><path d="M2 0v8l5-4z"/></svg></button>
              <button aria-label="Last layout" class="flex w-[10px] items-center justify-center border-r border-[#bbb] bg-white"><svg class="size-[6px]" viewBox="0 0 8 8"><path d="M5 0h2v8H5zM0 0v8l5-4z"/></svg></button>
              <button aria-label="Add layout" class="flex w-[11px] items-center justify-center border-r border-[#bbb] bg-white"><svg class="size-[6px]" viewBox="0 0 8 8"><path d="M3 0h2v3h3v2H5v3H3V5H0V3h3z"/></svg></button>
            </div>
            <div class="flex items-stretch pl-[4px]">
              <svg class="h-[12px] w-[5px]" viewBox="0 0 5 12"><path stroke="#222" d="M0 1l5 10"/></svg>
              <a href="#" aria-current="page" class="bg-white px-[2px] leading-[12px] font-bold text-black">Model</a>
              <svg class="h-[12px] w-[6px]" viewBox="0 0 6 12"><path fill="none" stroke="#222" d="M6 1L0 11M3 6l3 5"/></svg>
              <a href="#" class="px-[3px] leading-[12px]">Layout1</a>
              <svg class="h-[12px] w-[6px]" viewBox="0 0 6 12"><path fill="none" stroke="#222" d="M0 1l6 10M3 6l-3 5"/></svg>
              <a href="#" class="px-[3px] leading-[12px]">Layout2</a>
              <svg class="h-[12px] w-[6px]" viewBox="0 0 6 12"><path stroke="#222" d="M5 1L0 11"/></svg>
            </div>
            <button aria-label="Layout list" class="ml-auto flex w-[11px] items-center justify-center border-x border-[#bbb] bg-white"><svg class="size-[6px]"><use href="#caret"/></svg></button>
          </div>
          <div class="h-[2px] shrink-0 bg-[#c9cfdd]"></div>
        </section>

        <!-- tool palettes -->
        <aside class="flex w-[122px] shrink-0 flex-col overflow-hidden border-l-2 border-[#8c8c8c] bg-[#f0f0f0] text-[#222]">
          <h2 class="mt-px flex h-[12px] shrink-0 items-center gap-[4px] bg-[#9f9f9f] pl-px text-[9px] font-bold whitespace-nowrap text-black"><span class="h-[8px] w-[2px] bg-[#777]"></span>Tool Palettes - All ...</h2>
          <div class="flex min-h-0 flex-1 pt-[2px] pb-[3px]">
            <div class="flex w-[12px] shrink-0 flex-col gap-px [&>button]:flex [&>button]:rotate-180 [&>button]:items-center [&>button]:justify-center [&>button]:border [&>button]:border-[#999] [&>button]:leading-[10px] [&>button]:whitespace-nowrap [&>button]:[writing-mode:vertical-rl]">
              <button class="h-[36px] shrink-0 bg-[#f9c878]">Modify</button>
              <button class="h-[34px] shrink-0">Inquiry</button>
              <button class="h-[29px] shrink-0">View</button>
              <button class="h-[39px] shrink-0">3D Orbit</button>
              <button class="h-[50px] shrink-0">Draw Order</button>
              <button class="h-[33px] shrink-0">Walls</button>
              <button class="min-h-0 flex-1 bg-[#ddd]">...</button>
            </div>
            <div class="min-w-0 flex-1 overflow-hidden pl-[3px] [&_button]:flex [&_button]:items-center [&_button]:gap-[3px] [&_button]:whitespace-nowrap [&_svg]:size-[18px]">
              <div class="grid h-[235px] auto-rows-fr">
                <button><svg><use href="#clone"/></svg>Clone</button>
                <button><svg><use href="#offset"/></svg>Offset</button>
                <button><svg><use href="#scale"/></svg>Scale</button>
                <button><svg class="p-[2px]"><use href="#xred"/></svg>Delete</button>
                <button><svg><use href="#pos3d"/></svg>3D Positioner</button>
                <button><svg><use href="#rot"/></svg>Rotate</button>
                <button><svg><use href="#rot3d"/></svg>3D Rotate</button>
                <button><svg><use href="#mirror"/></svg>Mirror</button>
                <button><svg><use href="#mir3d"/></svg>3D Mirror</button>
                <button><svg><use href="#array"/></svg>Rectangular Array</button>
              </div>
              <button class="h-[23px]"><svg><use href="#polar"/></svg>Polar Array</button>
            </div>
            <div class="mr-[2px] flex w-[9px] shrink-0 flex-col items-center pt-[3px] pb-[2px] text-[#333]">
              <svg class="size-[6px]"><use href="#chevu"/></svg>
              <div class="mt-[15px] h-[66px] w-[9px] bg-[#cdcdcd]"></div>
              <svg class="mt-auto size-[6px]"><use href="#chevd"/></svg>
            </div>
          </div>
        </aside>
      </div>
    </div>

    <!-- modify toolbar -->
    <div role="toolbar" aria-label="Modify" class="flex w-[21px] shrink-0 flex-col items-stretch overflow-hidden bg-linear-to-r from-[#e9edf5] to-[#dbe1ec] pr-[4px]">
      <span class="my-[2px] h-px shrink-0 border-t border-dotted border-[#8a93a5]"></span>
      <div class="grid h-[96px] shrink-0 auto-rows-fr place-items-center">
        <button aria-label="Move"><svg class="size-[11px]"><use href="#move"/></svg></button>
        <button aria-label="Copy"><svg class="size-[11px]"><use href="#copy"/></svg></button>
        <button aria-label="Clone"><svg class="size-[11px]"><use href="#clone"/></svg></button>
        <button aria-label="Parallel"><svg class="size-[11px]"><use href="#cshape"/></svg></button>
        <button aria-label="Offset"><svg class="size-[11px]"><use href="#steps"/></svg></button>
        <button aria-label="Scale"><svg class="size-[11px]"><use href="#scale"/></svg></button>
        <button aria-label="Delete"><svg class="size-[9px]"><use href="#xred"/></svg></button>
      </div>
      <span class="my-[2px] h-px shrink-0 bg-[#b9c1cf]"></span>
      <div class="grid h-[41px] shrink-0 auto-rows-fr place-items-center">
        <button aria-label="3D Positioner"><svg class="size-[11px]"><use href="#pos3d"/></svg></button>
        <button aria-label="Rotate"><svg class="size-[11px]"><use href="#rot"/></svg></button>
        <button aria-label="3D Rotate"><svg class="size-[11px]"><use href="#rot3d"/></svg></button>
      </div>
      <span class="my-[2px] h-px shrink-0 bg-[#b9c1cf]"></span>
      <div class="grid h-[28px] shrink-0 auto-rows-fr place-items-center">
        <button aria-label="Mirror"><svg class="size-[11px]"><use href="#mirror"/></svg></button>
        <button aria-label="3D Mirror"><svg class="size-[11px]"><use href="#mir3d"/></svg></button>
      </div>
      <span class="my-[2px] h-px shrink-0 bg-[#b9c1cf]"></span>
      <div class="grid h-[14px] shrink-0 place-items-center"><button aria-label="Array"><svg class="size-[10px]"><use href="#array"/></svg></button></div>
      <span class="my-[2px] h-px shrink-0 bg-[#b9c1cf]"></span>
      <div class="grid h-[81px] shrink-0 auto-rows-fr place-items-center">
        <button aria-label="Break"><svg class="size-[10px]"><use href="#brk"/></svg></button>
        <button aria-label="Join"><svg class="size-[11px]"><use href="#grn"/></svg></button>
        <button aria-label="Explode"><svg class="size-[11px]"><use href="#grnsel"/></svg></button>
        <button aria-label="Stretch"><svg class="size-[11px]"><use href="#grnbox"/></svg></button>
        <button aria-label="Edit text"><svg class="size-[11px]"><use href="#txt"/></svg></button>
        <button aria-label="Edit polyline"><svg class="size-[11px]" viewBox="0 0 16 16"><path fill="none" stroke="#2c7a4c" stroke-width="2" d="M1 9c4-8 8-8 9-3l5 4"/></svg></button>
      </div>
    </div>
  </main>

  <!-- command line -->
  <section aria-label="Command line" class="flex h-[71px] shrink-0 border-t border-b-2 border-[#a4a9b4] bg-white">
    <div class="flex w-[13px] shrink-0 flex-col items-center gap-[7px] border-r border-[#9a9fab] bg-[#cfd4df] pt-[4px] text-black">
      <button aria-label="Close command line"><svg class="size-[6px]"><use href="#close"/></svg></button>
      <button aria-label="Command line options"><svg class="size-[5px]"><use href="#caret"/></svg></button>
    </div>
    <div class="flex min-w-0 flex-1 flex-col font-['DejaVu_Sans_Mono',monospace] text-[8px] leading-[10px] text-[#222]">
      <pre class="flex-1 pt-[2px] pl-[3px] font-['DejaVu_Sans_Mono',monospace]">Command:
_DIMSTYLE
Command:
Auto saving open drawings...
Command: TOOLPALETTES</pre>
      <label class="flex h-[14px] items-center border-t border-[#bbb] pl-px">Command:<input type="text" aria-label="Command" class="ml-[3px] min-w-0 flex-1 outline-none"></label>
    </div>
    <div class="mb-[14px] flex w-[12px] shrink-0 flex-col items-center bg-[#f0f0f0] pt-[4px] pb-[3px] text-[#333]">
      <svg class="size-[6px]"><use href="#chevu"/></svg>
      <div class="mt-auto mb-[2px] h-[11px] w-[9px] bg-[#cdcdcd]"></div>
      <svg class="size-[6px]"><use href="#chevd"/></svg>
    </div>
  </section>

  <!-- status bar -->
  <footer class="flex h-[15px] shrink-0 items-center bg-linear-to-b from-[#c6c9d0] via-[#abaeb7] via-50% to-[#babdc4] text-[#333] [&_button]:flex [&_button]:h-[14px] [&_button]:items-center [&_button]:justify-center">
    <span class="flex-1 pl-[3px]">Ready</span>
    <span class="mr-[5px] h-[13px] w-px bg-[#dcdfe4]"></span><span class="h-[13px] w-px bg-[#dcdfe4]"></span>
    <svg class="mx-[3px] size-[9px]" viewBox="0 0 9 9"><path stroke="#e81a1a" stroke-width="1.400" d="M4.500 0v9M0 4.500h9"/></svg>
    <span class="w-[70px] text-center">415.6454,45.6773,0</span>
    <span class="mr-[3px] h-[13px] w-px bg-[#dcdfe4]"></span>
    <button aria-label="Entity snap" class="w-[15px] border border-[#5a93c8] bg-[#e6f2fb]"><svg class="size-[11px]" viewBox="0 0 12 12"><path stroke="#4ac0d8" d="M6 0v12M0 6h12"/><path fill="none" stroke="#e03030" stroke-width="1.200" d="M1 8l5-2V2M6 6h4"/></svg></button>
    <button aria-label="Object snap" class="ml-[3px] w-[16px]"><svg class="size-[11px]" viewBox="0 0 12 12"><path fill="none" stroke="#d83a3a" d="M0 7h12"/><path stroke="#3a9a50" d="M6 1v11"/><circle cx="6" cy="7" r="1.800" fill="#ddd" stroke="#d83a3a"/></svg></button>
    <button aria-label="Annotation scale" class="w-[19px]"><svg class="size-[12px]"><use href="#pyr"/></svg></button>
    <button class="w-[13px]">1:1</button>
    <button aria-label="Annotation visibility" class="mx-px w-[16px] border border-[#5a93c8] bg-[#d5e6f4]"><svg class="h-[12px] w-[14px]" viewBox="0 0 14 12"><use href="#pyr" width="11" height="12"/><circle cx="11" cy="7" r="2.500" fill="#ffe95a" stroke="#b8a030" stroke-width=".6"/></svg></button>
    <div class="grid w-[167px] grid-cols-9 justify-items-center [&>button]:w-[15px]">
      <button aria-label="Auto scale"><svg class="h-[12px] w-[14px]" viewBox="0 0 14 12"><use href="#pyr" width="11" height="12"/><path stroke="#a07850" stroke-width="1.200" d="M10 1v6M7 4h6"/></svg></button>
      <button aria-label="Snap"><svg class="size-[10px]" viewBox="0 0 10 10"><path stroke="#444" stroke-width="1.300" stroke-dasharray="1.300 1.500" d="M0 1h10M0 4h10M0 7h10"/><circle cx="1.500" cy="8.500" r="1.500" fill="#e02020"/></svg></button>
      <button aria-label="Grid" class="border border-[#5a93c8] bg-[#d5e6f4]"><svg class="size-[11px]" viewBox="0 0 11 11"><path stroke="#333" stroke-width=".8" d="M2.500 0v11M5.500 0v11M8.500 0v11M0 2.500h11M0 5.500h11M0 8.500h11"/></svg></button>
      <button aria-label="Dynamic input" class="border border-[#5a93c8] bg-[#d5e6f4]"><svg class="size-[11px]" viewBox="0 0 11 11"><path stroke="#333" d="M2.500 0v5M0 2.500h5"/><path d="M4 6h7v3H4z"/></svg></button>
      <button aria-label="Ortho"><svg class="size-[11px]" viewBox="0 0 11 11"><path fill="none" stroke="#555" d="M1.500 0v10M1.500 6h4v4"/><path stroke="#e03030" d="M1 10.500h10"/></svg></button>
      <button aria-label="Polar"><svg class="size-[11px]" viewBox="0 0 11 11"><circle cx="5.500" cy="5.500" r="4.500" fill="none" stroke="#333" stroke-width="1.200"/><path fill="none" stroke="#e03030" d="M5 6l4-4M5 6h5"/></svg></button>
      <button aria-label="Esnap" class="border border-[#5a93c8] bg-[#d5e6f4]"><svg class="size-[11px]" viewBox="0 0 11 11"><path fill="#e6f2fb" stroke="#555" d="M2 2h8v8H2z"/><path fill="none" stroke="#e03030" d="M.5.5h3v3h-3z"/></svg></button>
      <button aria-label="Tracking" class="border border-[#5a93c8] bg-[#d5e6f4]"><svg class="size-[11px]" viewBox="0 0 11 11"><path fill="none" stroke="#333" d="M9 1L1.500 9.500H10"/><path stroke="#3a80c0" d="M3 5l4 3"/></svg></button>
      <button aria-label="Lineweight"><svg class="size-[11px]" viewBox="0 0 11 11"><path fill="#333" d="M0 1h11v1H0zM0 4h11v2H0zM0 8h11v2H0z"/></svg></button>
    </div>
    <button class="w-[27px] text-[#222]">MODEL</button>
    <button class="w-[26px] text-[#85888e]">TABLET</button>
    <div class="mr-[4px] grid w-[149px] grid-cols-8 justify-items-center [&_svg]:size-[12px]">
      <button aria-label="Settings" class="text-[#1466b8]"><svg><use href="#gear"/></svg></button>
      <button aria-label="Notes"><svg viewBox="0 0 12 12"><path fill="#fff" stroke="#666" d="M1 1h8v10H1z"/><path stroke="#777" d="M3 5h5M3 8h5"/><path stroke="#f09a30" stroke-width="2" d="M7 6l5-6"/></svg></button>
      <button aria-label="Entities"><svg viewBox="0 0 12 12"><g fill="#eee" stroke="#444"><path d="M1 1h5v4H1zM6 5l-4 6h5z"/><circle cx="9" cy="3" r="2"/><path d="M7 6l4 5"/></g></svg></button>
      <button aria-label="Badge"><svg viewBox="0 0 12 12"><circle cx="6" cy="3.500" r="2.300" fill="none" stroke="#444" stroke-width="2"/><path fill="#444" d="M3 6h6v2l1 4-3-2H5l-3 2 1-4z"/></svg></button>
      <button aria-label="Display"><svg viewBox="0 0 12 12"><path fill="#eaf4ff" stroke="#1466b8" stroke-width="1.200" d="M1 1h10v7H1z"/><path fill="#1466b8" d="M4 9h4v2H4zM3 3h3v2H3zM7 5h3v2H7z"/></svg></button>
      <button aria-label="Windows"><svg viewBox="0 0 12 12"><path fill="#fff" stroke="#1466b8" d="M.5 1.500h7v5h-7zM4.500 5.500h7v5h-7z"/><path fill="#1466b8" d="M0 1h8v2H0zM4 5h8v2H4z"/></svg></button>
      <button aria-label="Information"><svg viewBox="0 0 12 12"><circle cx="6" cy="6" r="5" fill="#f4f4f4" stroke="#444"/><path fill="#1478d0" d="M5.200 3h1.600v6H5.200z"/></svg></button>
      <button aria-label="License status"><svg viewBox="0 0 12 12"><circle cx="6" cy="6" r="5.500" fill="#46a548"/><path fill="none" stroke="#fff" stroke-width="1.600" d="M3 6l2 2.500L9.500 4"/></svg></button>
    </div>
  </footer>
</div>
</body>
</html>
